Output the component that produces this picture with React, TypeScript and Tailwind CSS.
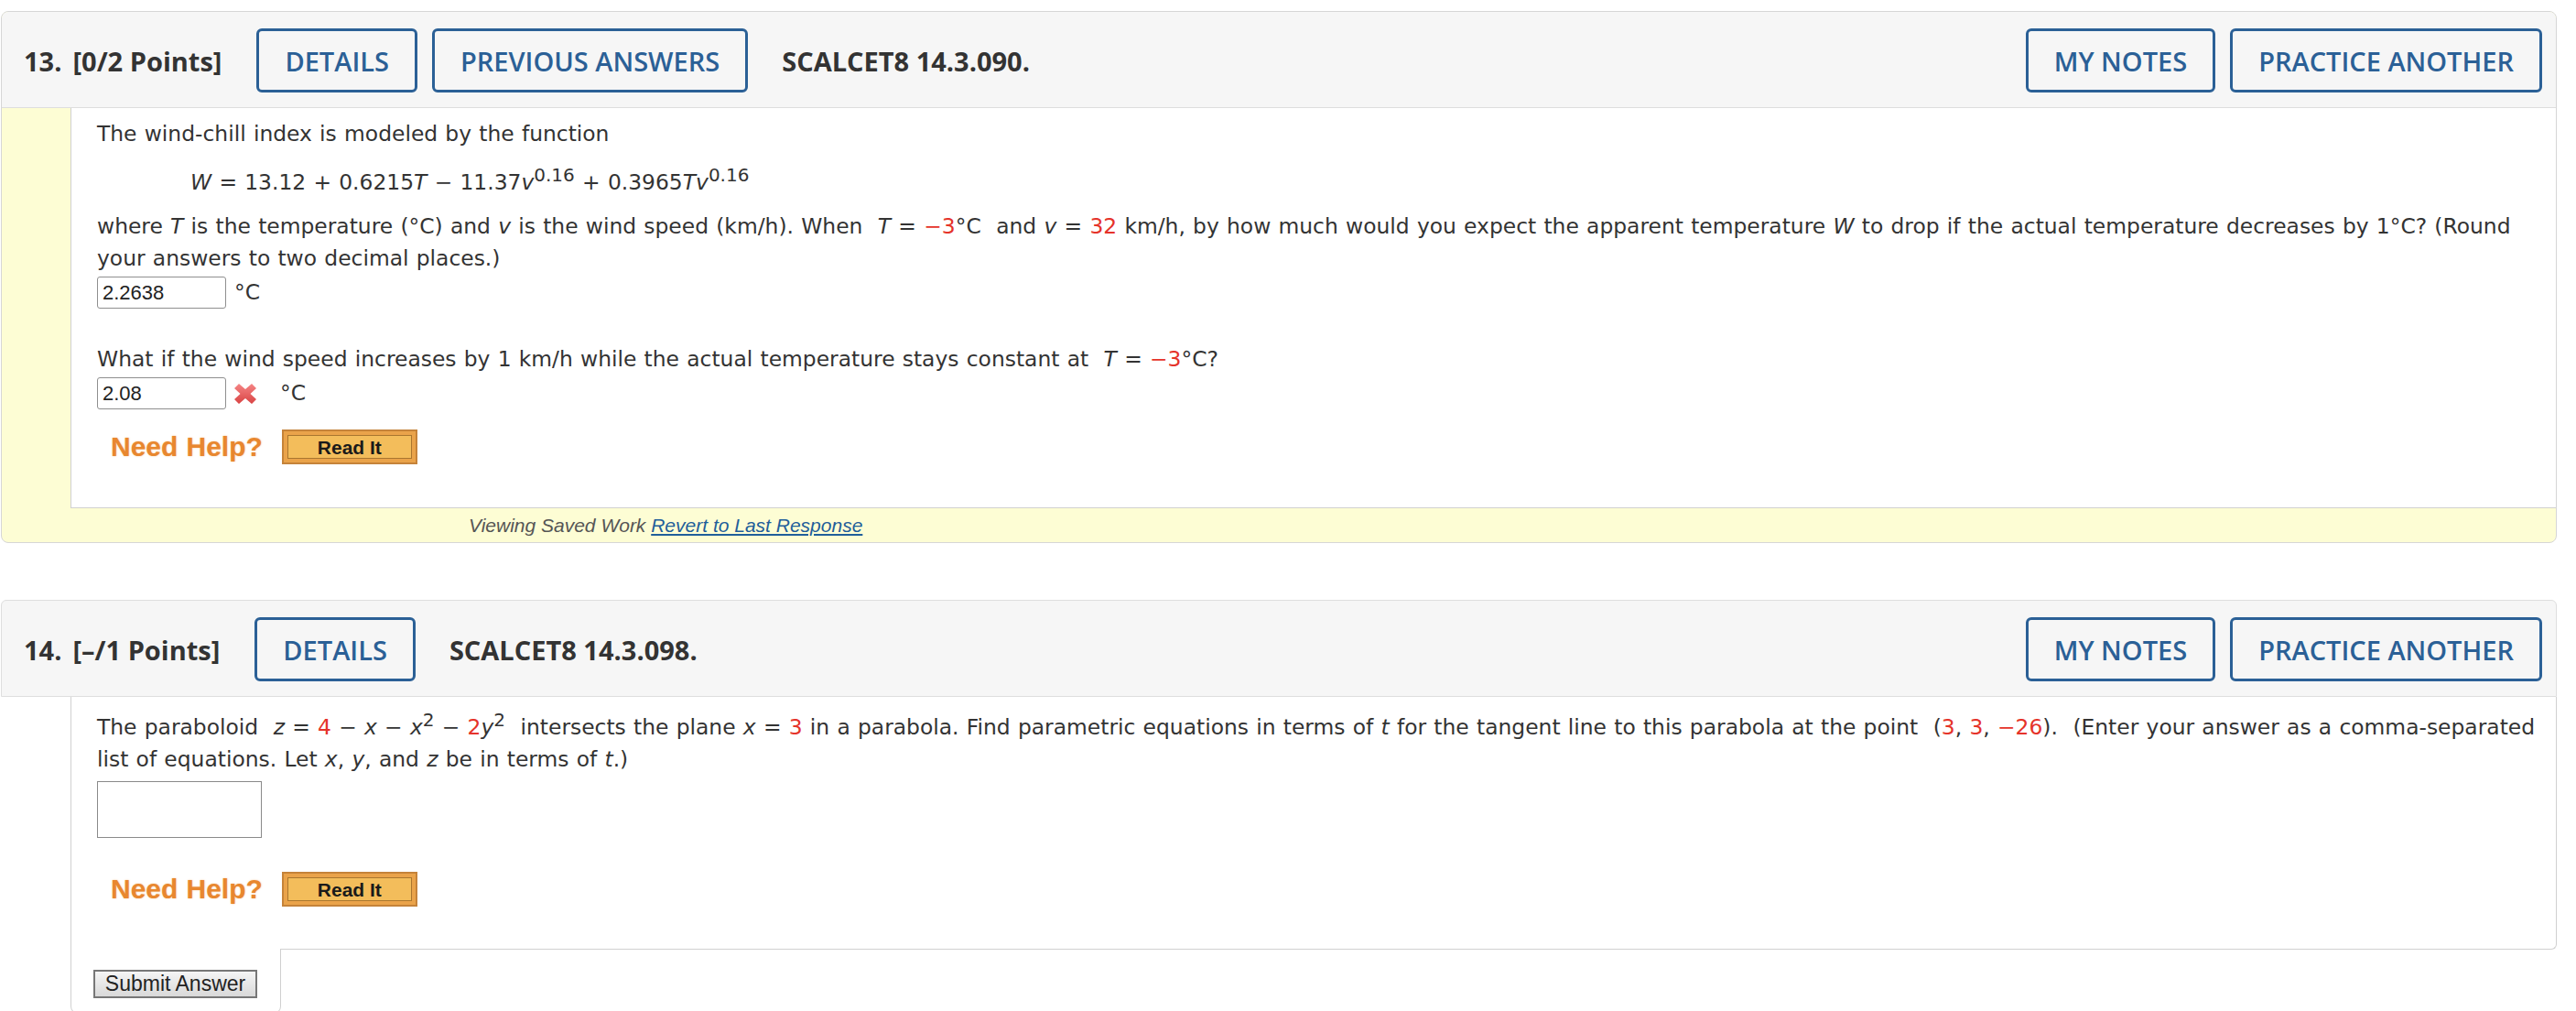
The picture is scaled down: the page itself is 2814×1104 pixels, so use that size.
import React from "react";

const bodyFont = "font-['DejaVu_Sans',Verdana,sans-serif]";
const headFont = "font-['Open_Sans',Arial,sans-serif]";
const arial = "font-['Liberation_Sans',Arial,sans-serif]";

function Red({ children }: { children: React.ReactNode }) {
  return <span className="text-[#e5332a]">{children}</span>;
}

function Sup({ children }: { children: React.ReactNode }) {
  return <span className="align-[9px] text-[20px] leading-none">{children}</span>;
}

function HeaderButton({ children }: { children: React.ReactNode }) {
  return (
    <button className="h-[70px] rounded-[6px] border-[3px] border-[#2b6096] px-[28px] text-[29px] font-semibold leading-none text-[#2b6096]">
      {children}
    </button>
  );
}

function QuestionHeader({
  num,
  points,
  code,
  showPrevious,
}: {
  num: number;
  points: string;
  code: string;
  showPrevious?: boolean;
}) {
  return (
    <div className={`flex items-center justify-between pl-[24px] pr-[15px] pt-[18px] pb-[16px] ${headFont}`}>
      <div className="flex items-center">
        <span className="mr-[38px] text-[29px] font-bold leading-none text-[#333]">
          <span className="mr-[12px]">{num}.</span>
          {points}
        </span>
        <div className="flex gap-[16px]">
          <HeaderButton>DETAILS</HeaderButton>
          {showPrevious && <HeaderButton>PREVIOUS ANSWERS</HeaderButton>}
        </div>
        <span className="ml-[37px] text-[29px] font-bold leading-none text-[#333]">{code}</span>
      </div>
      <div className="flex gap-[16px]">
        <HeaderButton>MY NOTES</HeaderButton>
        <HeaderButton>PRACTICE ANOTHER</HeaderButton>
      </div>
    </div>
  );
}

function WrongMark() {
  return (
    <svg width="24" height="22" viewBox="0 0 24 22" className="mx-[9px]">
      <defs>
        <linearGradient id="xg" x1="0" y1="0" x2="0" y2="1">
          <stop offset="0" stopColor="#f58585" />
          <stop offset="1" stopColor="#d94444" />
        </linearGradient>
      </defs>
      <path d="M0 5 L5 0 L12 6 L19 0 L24 5 L17.5 11 L24 17 L19 22 L12 16 L5 22 L0 17 L6.5 11 Z" fill="url(#xg)" />
    </svg>
  );
}

function HelpRow() {
  return (
    <div className="flex items-center pl-[15px]">
      <span
        className={`${arial} text-[30px] font-bold leading-none text-[#e8872f] [text-shadow:0_0_2px_rgba(240,160,80,0.6)]`}
      >
        Need Help?
      </span>
      <button className="ml-[21px] h-[38px] w-[148px] border-2 border-[#c5833a] bg-[#eaa34a] p-[4px]">
        <span
          className={`flex h-full w-full items-center justify-center border border-[#a9762f] bg-[#f3bd5b] ${arial} text-[21px] font-bold leading-none text-[#1a1a1a]`}
        >
          Read It
        </span>
      </button>
    </div>
  );
}

function AnswerInput({ value }: { value: string }) {
  return (
    <div
      className={`flex h-[35px] w-[141px] items-center rounded-[3px] border border-[#8f8f8f] bg-white pl-[5px] ${arial} text-[22px] text-[#222]`}
    >
      {value}
    </div>
  );
}

export default function App() {
  return (
    <div className={`min-h-[1104px] w-[2814px] overflow-hidden bg-white pt-[12px] ${bodyFont} text-[#333]`}>
      {/* question 13 */}
      <div className="ml-[1px] w-[2792px] overflow-hidden rounded-[8px] border border-[#d6d6d6] bg-[#fdfdd4]">
        <div className="border-b border-[#dedede] bg-[#f6f6f6]">
          <QuestionHeader num={13} points="[0/2 Points]" code="SCALCET8 14.3.090." showPrevious />
        </div>
        <div className="flex">
          <div className="w-[75px] shrink-0" />
          <div className="flex-1 border-b border-l border-[#d0d0d0] bg-white pl-[28px] pr-[14px] pt-[11px] pb-[47px] text-[23.4px] leading-[35px] [word-spacing:0.8px]">
            <p>The wind-chill index is modeled by the function</p>
            <p className="mt-[17px] ml-[102px]">
              <i>W</i> = 13.12 + 0.6215<i>T</i> − 11.37<i>v</i>
              <Sup>0.16</Sup> + 0.3965<i>Tv</i>
              <Sup>0.16</Sup>
            </p>
            <p className="mt-[13px]">
              where <i>T</i> is the temperature (°C) and <i>v</i> is the wind speed (km/h). When&nbsp; <i>T</i> ={" "}
              <Red>−3</Red>°C&nbsp; and <i>v</i> = <Red>32</Red> km/h, by how much would you expect the apparent
              temperature <i>W</i> to drop if the actual temperature decreases by 1°C? (Round your answers to two
              decimal places.)
            </p>
            <div className="mt-[2px] flex items-center">
              <AnswerInput value="2.2638" />
              <span className="ml-[9px]">°C</span>
            </div>
            <p className="mt-[38px]">
              What if the wind speed increases by 1 km/h while the actual temperature stays constant at&nbsp; <i>T</i>{" "}
              = <Red>−3</Red>°C?
            </p>
            <div className="mt-[2px] flex items-center">
              <AnswerInput value="2.08" />
              <WrongMark />
              <span className="ml-[17px]">°C</span>
            </div>
            <div className="mt-[22px]">
              <HelpRow />
            </div>
          </div>
        </div>
        <div className={`flex h-[37px] items-center pl-[510px] ${arial} text-[21px] italic text-[#555]`}>
          Viewing Saved Work&nbsp;
          <a className="text-[#1f5e9a] underline">Revert to Last Response</a>
        </div>
      </div>

      {/* question 14 */}
      <div className="mt-[62px] ml-[1px] w-[2792px]">
        <div className="rounded-t-[6px] border border-[#dedede] bg-[#f6f6f6]">
          <QuestionHeader num={14} points="[–/1 Points]" code="SCALCET8 14.3.098." />
        </div>
        <div className="ml-[76px] rounded-br-[6px] border-r border-b border-l border-[#d0d0d0] bg-white pl-[28px] pr-[10px] pt-[15px] pb-[46px] text-[23.4px] leading-[35px] [word-spacing:0.8px]">
          <p>
            The paraboloid&nbsp; <i>z</i> = <Red>4</Red> − <i>x</i> − <i>x</i>
            <Sup>2</Sup> − <Red>2</Red>
            <i>y</i>
            <Sup>2</Sup>&nbsp; intersects the plane <i>x</i> = <Red>3</Red> in a parabola. Find parametric equations in
            terms of <i>t</i> for the tangent line to this parabola at the point&nbsp; (<Red>3</Red>, <Red>3</Red>,{" "}
            <Red>−26</Red>).&nbsp; (Enter your answer as a comma&#8209;separated list of equations. Let <i>x</i>,{" "}
            <i>y</i>, and <i>z</i> be in terms of <i>t</i>.)
          </p>
          <div className="mt-[6px] h-[62px] w-[180px] border border-[#8a8a8a] bg-white" />
          <div className="mt-[37px]">
            <HelpRow />
          </div>
        </div>
        <div className="-mt-px ml-[76px] h-[71px] w-[230px] rounded-b-[8px] border-r border-b border-l border-[#d0d0d0] bg-white pt-[23px] pl-[24px]">
          <button
            className={`h-[31px] w-[179px] border-2 border-[#777] bg-gradient-to-b from-[#f5f5f5] to-[#d9d9d9] ${arial} text-[23px] leading-none text-[#222]`}
          >
            Submit Answer
          </button>
        </div>
      </div>
    </div>
  );
}
